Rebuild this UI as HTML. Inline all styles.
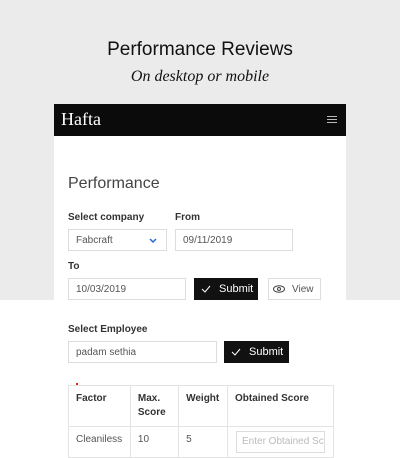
<!DOCTYPE html><html><head><style>
*{margin:0;padding:0;box-sizing:border-box}
body{width:400px;height:452px;overflow:hidden;background:#fff;font-family:"Liberation Sans",sans-serif;position:relative}
.a{position:absolute}
.bg{left:0;top:0;width:400px;height:300px;background:#ebebeb}
.inp{position:absolute;border:1px solid #ddd;background:#fff;font-size:10px;color:#555;padding-left:7px;line-height:21px}
.lbl{position:absolute;font-size:10px;font-weight:bold;color:#333}
.btn{position:absolute;background:#111;color:#fff;font-size:10px;line-height:22px}
td{border:1px solid #e3e3e3;font-size:10px;color:#555;vertical-align:top;padding:6px 7px}
th{border:1px solid #e3e3e3;font-size:10px;color:#333;text-align:left;vertical-align:top;padding:6px 7px;line-height:14px}
</style></head><body>
<div class="a bg"></div>
<div class="a" style="left:0;top:39px;width:400px;text-align:center;font-size:19px;color:#111">Performance Reviews</div>
<div class="a" style="left:0;top:68px;width:400px;text-align:center;font-size:16px;font-style:italic;font-family:'Liberation Serif',serif;color:#111">On desktop or mobile</div>
<div class="a" style="left:54px;top:104px;width:292px;height:196px;background:#fff"></div>
<div class="a" style="left:54px;top:104px;width:292px;height:32px;background:#0b0b0b"></div>
<div class="a" style="left:61px;top:109px;font-family:'Liberation Serif',serif;font-size:18px;color:#fff">Hafta</div>
<div class="a" style="left:327px;top:116px;width:10px;height:1px;background:#bbb;box-shadow:0 3px 0 #bbb,0 6px 0 #bbb"></div>
<div class="a" style="left:68px;top:175px;font-size:16px;color:#444">Performance</div>
<div class="lbl" style="left:68px;top:212px">Select company</div>
<div class="lbl" style="left:175px;top:212px">From</div>
<div class="inp" style="left:68px;top:229px;width:99px;height:22px">Fabcraft<svg style="position:absolute;left:80px;top:8px" width="8" height="5"><path d="M1 1l3 3 3-3" stroke="#2a6ad8" stroke-width="1.5" fill="none"/></svg></div>
<div class="inp" style="left:175px;top:229px;width:118px;height:22px">09/11/2019</div>
<div class="lbl" style="left:68px;top:261px">To</div>
<div class="inp" style="left:68px;top:278px;width:118px;height:22px">10/03/2019</div>
<div class="btn" style="left:194px;top:278px;width:64px;height:22px"><svg style="position:absolute;left:7px;top:7px" width="10" height="8"><path d="M1 4l3 3 5-6" stroke="#fff" stroke-width="1" fill="none"/></svg><span style="position:absolute;left:25px;font-size:11px">Submit</span></div>
<div class="inp" style="left:268px;top:278px;width:53px;height:22px;padding-left:0"><svg style="position:absolute;left:4px;top:6px" width="12" height="8"><ellipse cx="6" cy="4" rx="5.5" ry="3.3" stroke="#444" fill="none"/><circle cx="6" cy="4" r="1.5" stroke="#444" fill="none"/></svg><span style="position:absolute;left:23px">View</span></div>
<div class="lbl" style="left:68px;top:324px">Select Employee</div>
<div class="inp" style="left:68px;top:341px;width:149px;height:22px">padam sethia</div>
<div class="btn" style="left:224px;top:341px;width:65px;height:22px"><svg style="position:absolute;left:7px;top:7px" width="10" height="8"><path d="M1 4l3 3 5-6" stroke="#fff" stroke-width="1" fill="none"/></svg><span style="position:absolute;left:25px;font-size:11px">Submit</span></div>
<div class="a" style="left:76px;top:383px;width:2px;height:2px;background:#e22"></div>
<table class="a" style="left:68px;top:385px;width:266px;border-collapse:collapse">
<tr><th style="width:62px;height:40px">Factor</th><th style="width:49px">Max.<br>Score</th><th style="width:49px">Weight</th><th>Obtained Score</th></tr>
<tr><td style="padding-top:7px">Cleaniless</td><td style="padding-top:7px">10</td><td style="padding-top:7px">5</td><td style="padding:4px 8px"><div style="border:1px solid #ddd;height:22px;font-size:10px;color:#bbb;line-height:20px;padding-left:5px;white-space:nowrap;overflow:hidden;width:89px">Enter Obtained Score</div></td></tr>
</table>
</body></html>
